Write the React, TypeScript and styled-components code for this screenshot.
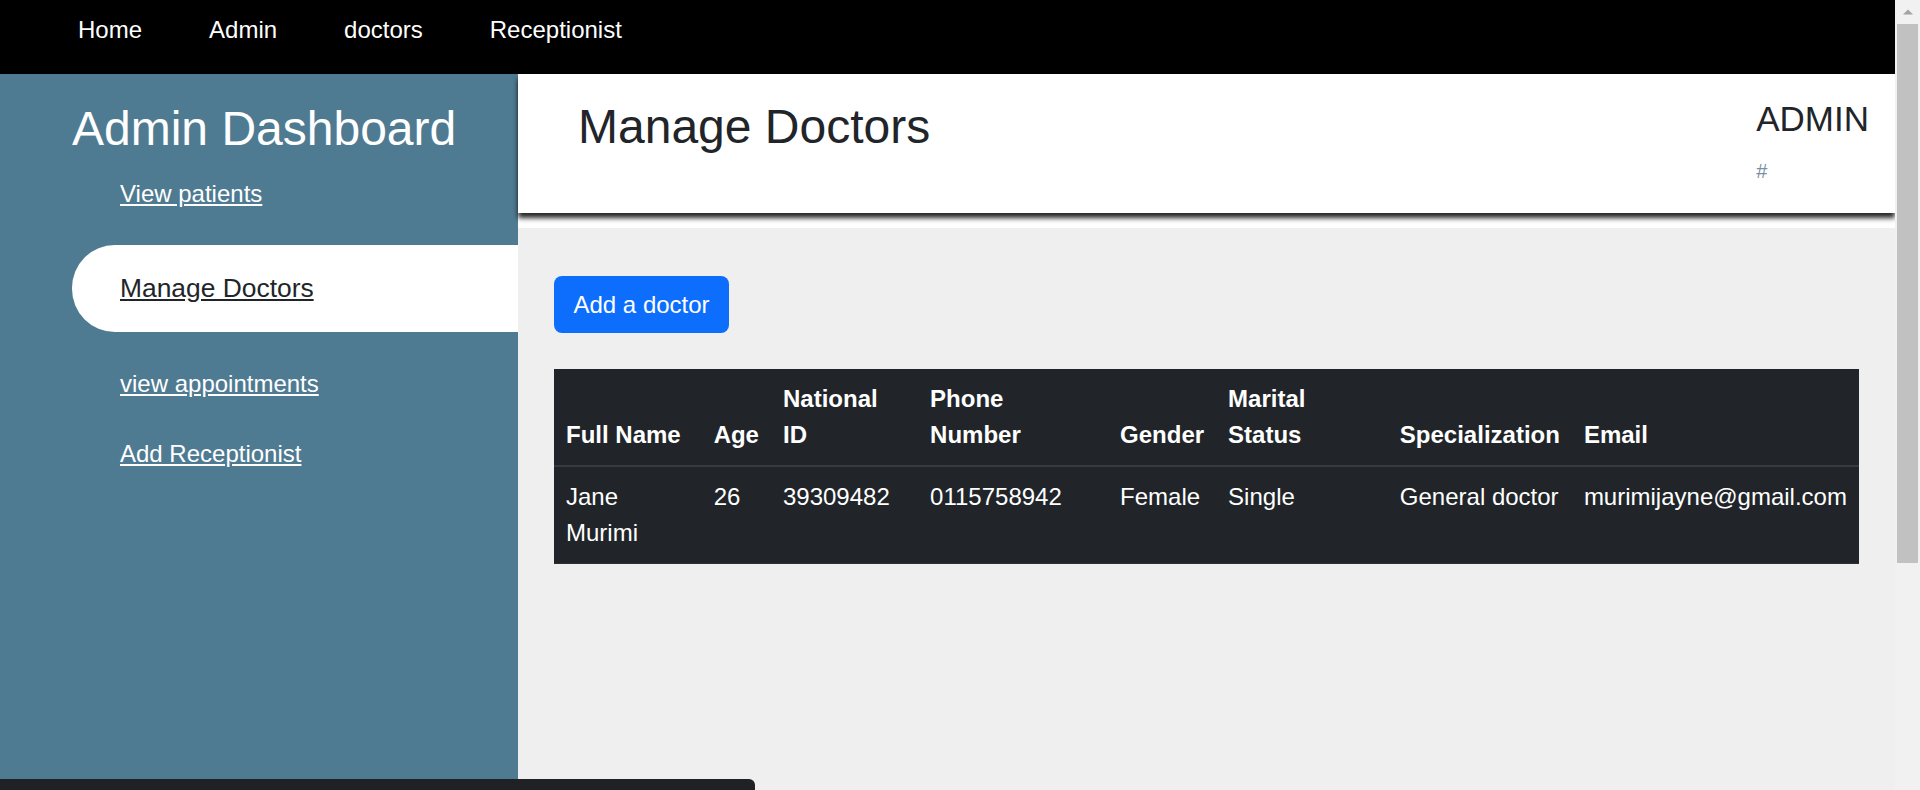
import React from "react";
import styled, { createGlobalStyle } from "styled-components";

const GlobalStyle = createGlobalStyle`
  html, body {
    margin: 0;
    padding: 0;
  }
  body {
    font-family: "Liberation Sans", Arial, sans-serif;
    background: #efefef;
    color: #212529;
  }
`;

const Page = styled.div`
  display: flex;
  flex-direction: column;
  margin-right: 25px;
`;

const TopNav = styled.nav`
  height: 74px;
  box-sizing: border-box;
  background: #000;
  display: flex;
  align-items: flex-start;
  gap: 67px;
  padding: 16px 0 0 78px;
`;

const TopLink = styled.a`
  color: #fff;
  font-size: 24px;
  line-height: normal;
  text-decoration: none;
`;

const Body = styled.div`
  display: flex;
  min-height: 1014px;
`;

const Sidebar = styled.aside`
  width: 518px;
  flex-shrink: 0;
  background: #4f7b92;
  box-sizing: border-box;
  padding: 27px 0 0 72px;
`;

const SideTitle = styled.h1`
  margin: 0;
  font-size: 48px;
  line-height: 55px;
  font-weight: 400;
  color: #fff;
`;

const SideList = styled.ul`
  list-style: none;
  margin: 3px 0 0;
  padding: 0;
`;

const SideItem = styled.li<{ $active?: boolean }>`
  padding: ${(p) => (p.$active ? "27.8px 0 27.8px 48px" : "21px 0 21px 48px")};
  margin: ${(p) => (p.$active ? "16px 0 17px" : "0")};
  background: ${(p) => (p.$active ? "#fff" : "transparent")};
  border-radius: ${(p) => (p.$active ? "43px 0 0 43px" : "0")};
  line-height: normal;
`;

const SideLink = styled.a<{ $active?: boolean }>`
  font-size: ${(p) => (p.$active ? "26.4px" : "24px")};
  line-height: normal;
  color: ${(p) => (p.$active ? "#212529" : "#fff")};
  text-decoration: underline;
`;

const Main = styled.main`
  flex: 1;
  display: flex;
  flex-direction: column;
  background: #fff;
`;

const Header = styled.header`
  position: relative;
  height: 139px;
  box-sizing: border-box;
  background: #fff;
  display: flex;
  justify-content: space-between;
  align-items: flex-start;
  padding: 25px 26px 0 60px;
  box-shadow: 0 5px 5px rgba(0, 0, 0, 0.85);
`;

const PageTitle = styled.h2`
  margin: 0;
  font-size: 48px;
  font-weight: 400;
  line-height: normal;
  color: #212529;
`;

const UserBox = styled.div`
  display: flex;
  flex-direction: column;
  align-items: flex-start;
`;

const UserName = styled.h3`
  margin: 0;
  font-size: 35px;
  font-weight: 400;
  line-height: normal;
  color: #212529;
`;

const UserLink = styled.a`
  margin-top: 21px;
  font-size: 20px;
  line-height: normal;
  color: #7a8fa5;
  text-decoration: none;
`;

const Content = styled.section`
  flex: 1;
  margin-top: 15px;
  background: #efefef;
  padding: 48px 36px;
  display: flex;
  flex-direction: column;
  align-items: flex-start;
  gap: 36px;
`;

const PrimaryButton = styled.button`
  font-family: "Liberation Sans", Arial, sans-serif;
  font-size: 24px;
  line-height: 27px;
  color: #fff;
  background: #0d6efd;
  border: none;
  border-radius: 8px;
  padding: 15px 19.5px;
  cursor: pointer;
`;

const Table = styled.table`
  width: 100%;
  border-collapse: collapse;
  background: #212529;
  color: #fff;
  font-size: 24px;
  line-height: 36px;
`;

const Th = styled.th`
  text-align: left;
  vertical-align: bottom;
  font-weight: 700;
  padding: 12px;
  border-bottom: 2px solid #373b3e;
`;

const Td = styled.td`
  vertical-align: top;
  padding: 12px;
  border-bottom: 1px solid #2c3034;
`;

const StatusBubble = styled.div`
  position: fixed;
  left: 0;
  bottom: 0;
  width: 755px;
  height: 11px;
  background: #202124;
  border-top-right-radius: 6px;
`;

const ScrollTrack = styled.div`
  position: fixed;
  top: 0;
  right: 0;
  width: 25px;
  height: 100vh;
  background: #f1f1f1;
  display: flex;
  flex-direction: column;
  align-items: center;
`;

const ScrollArrow = styled.div`
  height: 24px;
  width: 25px;
  display: flex;
  align-items: center;
  justify-content: center;
`;

const ScrollThumb = styled.div`
  width: 21px;
  height: 539px;
  background: #c1c1c1;
`;

const headers = [
  "Full Name",
  "Age",
  "National ID",
  "Phone Number",
  "Gender",
  "Marital Status",
  "Specialization",
  "Email",
];

const doctors = [
  [
    "Jane Murimi",
    "26",
    "39309482",
    "0115758942",
    "Female",
    "Single",
    "General doctor",
    "murimijayne@gmail.com",
  ],
];

const sideLinks = [
  { label: "View patients" },
  { label: "Manage Doctors", active: true },
  { label: "view appointments" },
  { label: "Add Receptionist" },
];

export default function App() {
  return (
    <>
      <GlobalStyle />
      <Page>
        <TopNav>
          <TopLink href="#">Home</TopLink>
          <TopLink href="#">Admin</TopLink>
          <TopLink href="#">doctors</TopLink>
          <TopLink href="#">Receptionist</TopLink>
        </TopNav>
        <Body>
          <Sidebar>
            <SideTitle>Admin Dashboard</SideTitle>
            <SideList>
              {sideLinks.map((l) => (
                <SideItem key={l.label} $active={l.active}>
                  <SideLink href="#" $active={l.active}>
                    {l.label}
                  </SideLink>
                </SideItem>
              ))}
            </SideList>
          </Sidebar>
          <Main>
            <Header>
              <PageTitle>Manage Doctors</PageTitle>
              <UserBox>
                <UserName>ADMIN</UserName>
                <UserLink href="#">#</UserLink>
              </UserBox>
            </Header>
            <Content>
              <PrimaryButton>Add a doctor</PrimaryButton>
              <Table>
                <thead>
                  <tr>
                    {headers.map((h) => (
                      <Th key={h}>{h}</Th>
                    ))}
                  </tr>
                </thead>
                <tbody>
                  {doctors.map((row, i) => (
                    <tr key={i}>
                      {row.map((c, j) => (
                        <Td key={j}>{c}</Td>
                      ))}
                    </tr>
                  ))}
                </tbody>
              </Table>
            </Content>
          </Main>
        </Body>
      </Page>
      <ScrollTrack>
        <ScrollArrow>
          <svg width="10" height="6" viewBox="0 0 10 6">
            <path d="M0 5.5 L5 0.5 L10 5.5 Z" fill="#a3a3a3" />
          </svg>
        </ScrollArrow>
        <ScrollThumb />
      </ScrollTrack>
      <StatusBubble />
    </>
  );
}
